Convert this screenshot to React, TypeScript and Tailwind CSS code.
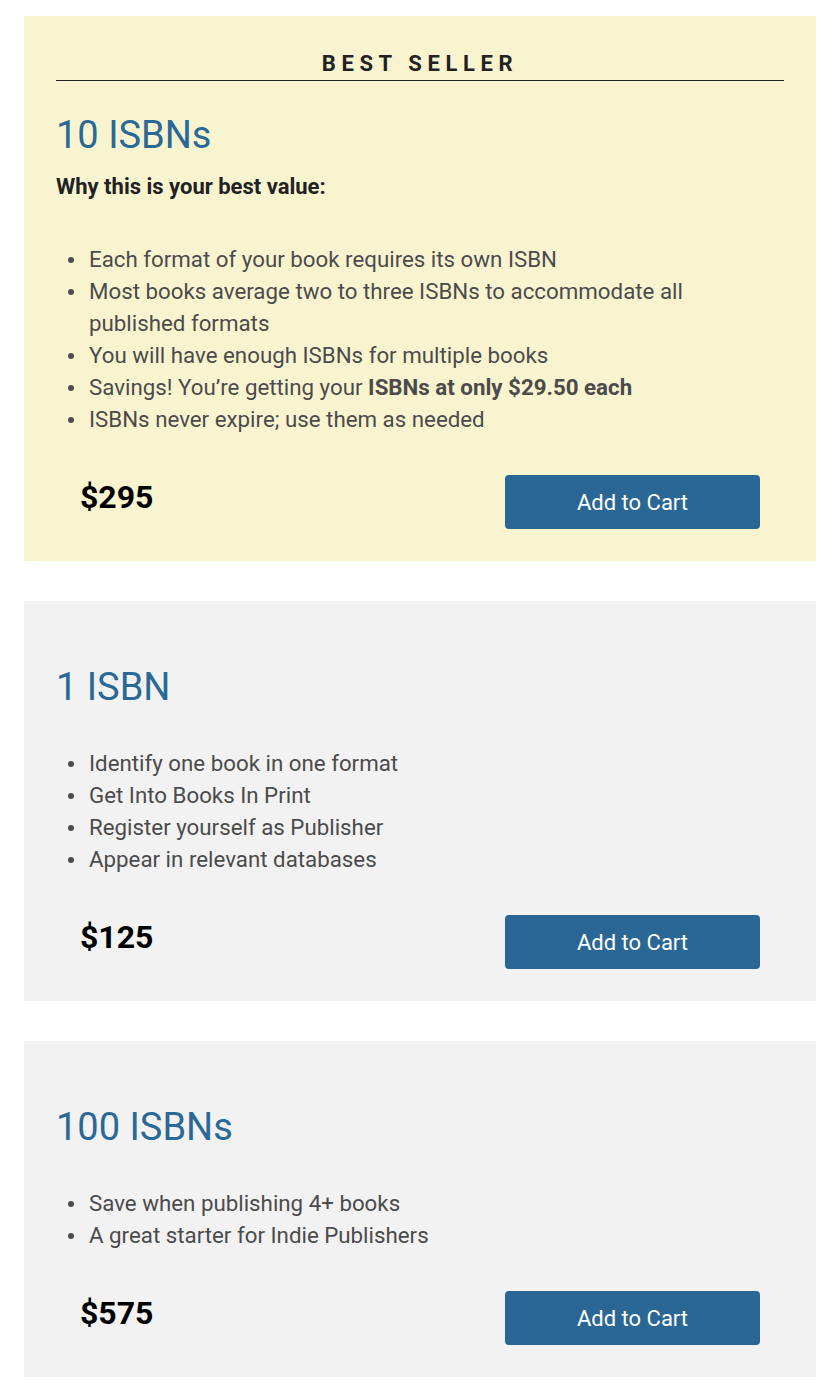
import type { ReactNode } from 'react';

type Plan = {
  id: string;
  title: string;
  price: string;
  featured?: boolean;
  lead?: string;
  points: ReactNode[];
};

const plans: Plan[] = [
  {
    id: 'ten',
    title: '10 ISBNs',
    price: '$295',
    featured: true,
    lead: 'Why this is your best value:',
    points: [
      'Each format of your book requires its own ISBN',
      'Most books average two to three ISBNs to accommodate all published formats',
      'You will have enough ISBNs for multiple books',
      <>
        Savings! You’re getting your <strong className="font-bold">ISBNs at only $29.50 each</strong>
      </>,
      'ISBNs never expire; use them as needed',
    ],
  },
  {
    id: 'one',
    title: '1 ISBN',
    price: '$125',
    points: [
      'Identify one book in one format',
      'Get Into Books In Print',
      'Register yourself as Publisher',
      'Appear in relevant databases',
    ],
  },
  {
    id: 'hundred',
    title: '100 ISBNs',
    price: '$575',
    points: ['Save when publishing 4+ books', 'A great starter for Indie Publishers'],
  },
];

function PlanCard({ plan }: { plan: Plan }) {
  return (
    <section
      className={`w-[792px] px-[32px] pt-[32px] pb-[32px] ${
        plan.featured ? 'bg-[#f9f4d0]' : 'bg-[#f2f2f2]'
      }`}
    >
      {plan.featured && (
        <div className="border-b border-[#222] text-center text-[22px] leading-[32px] font-bold tracking-[5.6px] text-[#222] uppercase">
          Best Seller
        </div>
      )}

      <h2 className="mt-[30px] text-[38px] leading-[48px] font-normal text-[#2a6896]">{plan.title}</h2>

      {plan.lead ? (
        <p className="mt-[12px] mb-[40px] text-[22px] leading-[32px] font-bold text-[#222]">{plan.lead}</p>
      ) : (
        <div className="h-[36px]" />
      )}

      <ul className="pl-[12px] pr-[10px] text-[22.3px] leading-[32px] text-[#4b4b4b]">
        {plan.points.map((point, i) => (
          <li key={i} className="flex items-start">
            <span className="mt-[14px] h-[6px] w-[6px] shrink-0 rounded-full bg-[#4b4b4b]" />
            <span className="ml-[15px]">{point}</span>
          </li>
        ))}
      </ul>

      {/* price + cart */}
      <div className="mt-[40px] flex items-start justify-between px-[24px]">
        <span className="text-[32px] leading-[44px] font-bold text-black">{plan.price}</span>
        <button className="flex h-[54px] w-[255px] items-center justify-center rounded-[4px] bg-[#2a6795] text-[22px] text-white">
          Add to Cart
        </button>
      </div>
    </section>
  );
}

export default function App() {
  return (
    <div className="min-h-[1398px] bg-white pt-[16px] pl-[24px] font-['Roboto',sans-serif]">
      <div className="flex flex-col gap-[40px]">
        {plans.map((plan) => (
          <PlanCard key={plan.id} plan={plan} />
        ))}
      </div>
    </div>
  );
}
